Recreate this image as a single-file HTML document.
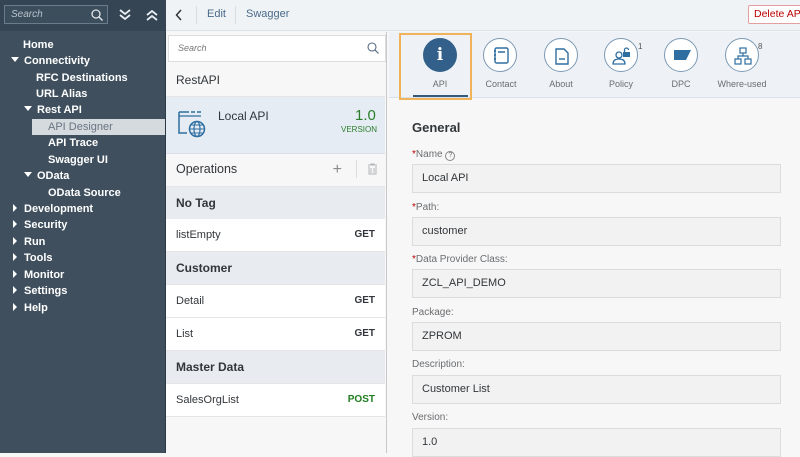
<!DOCTYPE html>
<html><head><style>
*{margin:0;padding:0;box-sizing:border-box}
body{width:800px;height:453px;overflow:hidden;font-family:"Liberation Sans",sans-serif;background:#f7f7f7;position:relative}
.a{position:absolute}
.nav{color:#fff;font-size:11px;font-weight:bold;position:absolute;white-space:nowrap}
.tri{display:inline-block;width:0;height:0}
.row{position:absolute;left:166px;width:219px;height:33px;border-bottom:1px solid #e5e5e5;font-size:11px;color:#32363a;padding:0 10px;line-height:32px;background:#fff}
.grp{background:#e8ecf0;font-weight:bold;font-size:12px;color:#32363a}
.m{float:right;font-weight:bold;font-size:10px;color:#32363a}
.lbl{position:absolute;left:412px;font-size:10px;color:#6a6d70}
.lbl b{color:#bb0000;font-weight:normal}
.inp{position:absolute;left:412px;width:369px;height:29px;background:#f2f2f2;border:1px solid #dcdcdc;font-size:11px;color:#32363a;padding-left:9px;line-height:27px}
.ic{position:absolute;top:38px;width:34px;height:34px;border:1px solid #7c99b4;border-radius:50%;background:#fff}
.tl{position:absolute;top:79px;font-size:9px;color:#6a6d70;width:80px;text-align:center}
</style></head><body>
<!-- sidebar -->
<div class="a" style="left:0;top:0;width:166px;height:453px;background:#3f4f5e;border-right:1px solid #2b3a47"></div>
<div class="a" style="left:0;top:0;width:166px;height:31px;background:#354553"></div>
<div class="a" style="left:4px;top:5px;width:104px;height:19px;border:1px solid #6b7c8c;background:#3c4d5c;color:#b8c3cc;font-size:10px;font-style:italic;padding-left:6px;line-height:17px">Search
<svg class="a" style="right:4px;top:3px" width="12" height="12" viewBox="0 0 12 12"><circle cx="5" cy="5" r="4" fill="none" stroke="#dfe5ea" stroke-width="1.3"/><path d="M8 8l3.5 3.5" stroke="#dfe5ea" stroke-width="1.4"/></svg></div>
<svg class="a" style="left:118px;top:8px" width="14" height="14" viewBox="0 0 14 14"><path d="M2 2l5 4 5-4M2 7l5 4 5-4" fill="none" stroke="#e8eef3" stroke-width="1.8"/></svg>
<svg class="a" style="left:145px;top:8px" width="14" height="14" viewBox="0 0 14 14"><path d="M2 7l5-4 5 4M2 12l5-4 5 4" fill="none" stroke="#e8eef3" stroke-width="1.8"/></svg>
<div class="a" style="left:32px;top:119px;width:133px;height:16px;background:#d5dadf"></div>
<div class="nav" style="left:23px;top:39px">Home</div>
<div class="nav" style="left:11px;top:55px"><span class="tri" style="border-left:4px solid transparent;border-right:4px solid transparent;border-top:5px solid #fff;margin-right:5px;vertical-align:2px"></span>Connectivity</div>
<div class="nav" style="left:36px;top:72px">RFC Destinations</div>
<div class="nav" style="left:36px;top:88px">URL Alias</div>
<div class="nav" style="left:24px;top:104px"><span class="tri" style="border-left:4px solid transparent;border-right:4px solid transparent;border-top:5px solid #fff;margin-right:5px;vertical-align:2px"></span>Rest API</div>
<div class="nav" style="left:48px;top:121px;color:#6a7480;font-weight:normal">API Designer</div>
<div class="nav" style="left:48px;top:137px">API Trace</div>
<div class="nav" style="left:48px;top:154px">Swagger UI</div>
<div class="nav" style="left:24px;top:170px"><span class="tri" style="border-left:4px solid transparent;border-right:4px solid transparent;border-top:5px solid #fff;margin-right:5px;vertical-align:2px"></span>OData</div>
<div class="nav" style="left:48px;top:187px">OData Source</div>
<div class="nav" style="left:13px;top:203px"><span class="tri" style="border-top:4px solid transparent;border-bottom:4px solid transparent;border-left:4px solid #fff;margin-right:7px"></span>Development</div>
<div class="nav" style="left:13px;top:219px"><span class="tri" style="border-top:4px solid transparent;border-bottom:4px solid transparent;border-left:4px solid #fff;margin-right:7px"></span>Security</div>
<div class="nav" style="left:13px;top:236px"><span class="tri" style="border-top:4px solid transparent;border-bottom:4px solid transparent;border-left:4px solid #fff;margin-right:7px"></span>Run</div>
<div class="nav" style="left:13px;top:252px"><span class="tri" style="border-top:4px solid transparent;border-bottom:4px solid transparent;border-left:4px solid #fff;margin-right:7px"></span>Tools</div>
<div class="nav" style="left:13px;top:269px"><span class="tri" style="border-top:4px solid transparent;border-bottom:4px solid transparent;border-left:4px solid #fff;margin-right:7px"></span>Monitor</div>
<div class="nav" style="left:13px;top:285px"><span class="tri" style="border-top:4px solid transparent;border-bottom:4px solid transparent;border-left:4px solid #fff;margin-right:7px"></span>Settings</div>
<div class="nav" style="left:13px;top:302px"><span class="tri" style="border-top:4px solid transparent;border-bottom:4px solid transparent;border-left:4px solid #fff;margin-right:7px"></span>Help</div>
<!-- header -->
<div class="a" style="left:166px;top:0;width:634px;height:31px;background:#eff3f6;border-bottom:1px solid #d9e0e6"></div>
<svg class="a" style="left:175px;top:9px" width="8" height="12" viewBox="0 0 8 12"><path d="M6 1L1.5 6 6 11" fill="none" stroke="#32363a" stroke-width="1.5"/></svg>
<div class="a" style="left:196px;top:6px;width:1px;height:18px;background:#d9dde0"></div>
<div class="a" style="left:207px;top:8px;font-size:11px;color:#4a6a88">Edit</div>
<div class="a" style="left:235px;top:6px;width:1px;height:18px;background:#d9dde0"></div>
<div class="a" style="left:246px;top:8px;font-size:11px;color:#4a6a88">Swagger</div>
<div class="a" style="left:748px;top:5px;width:56px;height:19px;border:1px solid #e3a0a0;border-radius:2px;background:#fff;color:#bb0000;font-size:10.5px;padding-left:5px;line-height:17px;white-space:nowrap">Delete API</div>
<!-- middle -->
<div class="a" style="left:166px;top:32px;width:221px;height:421px;background:#f7f7f7;border-right:1px solid #c8c8c8"></div>
<div class="a" style="left:168px;top:35px;width:218px;height:27px;background:#fff;border:1px solid #ddd;font-size:9px;font-style:italic;color:#74777a;padding-left:9px;line-height:25px">Search
<svg class="a" style="right:6px;top:6px" width="12" height="12" viewBox="0 0 12 12"><circle cx="5" cy="5" r="4" fill="none" stroke="#556b82" stroke-width="1.1"/><path d="M8 8l3.5 3.5" stroke="#556b82" stroke-width="1.2"/></svg></div>
<div class="row" style="top:64px;background:#f7f7f7;font-size:12px;line-height:32px">RestAPI</div>
<div class="a" style="left:166px;top:97px;width:219px;height:57px;background:#e5ecf3;border-bottom:1px solid #dde"></div>
<svg class="a" style="left:178px;top:110px" width="30" height="28" viewBox="0 0 30 28"><path d="M1 2h10M13 2h4M19 2h4M1 2v21h8" fill="none" stroke="#2e6ea0" stroke-width="1.5"/><path d="M1 6h22" stroke="#2e6ea0" stroke-width="1.2"/><circle cx="19" cy="19" r="7.5" fill="none" stroke="#2e6ea0" stroke-width="1.5"/><ellipse cx="19" cy="19" rx="3" ry="7.5" fill="none" stroke="#2e6ea0" stroke-width="1.2"/><path d="M11.5 19h15M13 15h12M13 23h12" stroke="#2e6ea0" stroke-width="1"/></svg>
<div class="a" style="left:218px;top:109px;font-size:12px;color:#32363a">Local API</div>
<div class="a" style="left:355px;top:107px;font-size:15px;color:#2b7d2b">1.0</div>
<div class="a" style="left:341px;top:125px;font-size:8px;color:#2b7d2b">VERSION</div>
<div class="row" style="top:154px;background:#f7f7f7;font-size:12.5px;height:33px;line-height:31px">Operations<span style="float:right;color:#8a8d90;font-size:16px;margin-right:33px;font-weight:300">+</span></div>
<div class="a" style="left:356px;top:160px;width:1px;height:18px;background:#ddd"></div>
<svg class="a" style="left:367px;top:163px" width="11" height="12" viewBox="0 0 11 12"><path d="M1 2h9M4 2V1h3v1M2 3v8h7V3M4 5v5M7 5v5" fill="none" stroke="#b0b4b8" stroke-width="1"/></svg>
<div class="row grp" style="top:187px">No Tag</div>
<div class="row" style="top:219px">listEmpty<span class="m">GET</span></div>
<div class="row grp" style="top:252px">Customer</div>
<div class="row" style="top:285px">Detail<span class="m">GET</span></div>
<div class="row" style="top:318px">List<span class="m">GET</span></div>
<div class="row grp" style="top:351px">Master Data</div>
<div class="row" style="top:384px">SalesOrgList<span class="m" style="color:#1f7d1f">POST</span></div>
<!-- right tabs -->
<div class="a" style="left:389px;top:32px;width:411px;height:66px;background:#eef2f6;border-bottom:1px solid #d6e1eb"></div>
<div class="a" style="left:399px;top:33px;width:73px;height:67px;border:2px solid #f0b35a"></div>
<div class="a" style="left:413px;top:95px;width:55px;height:2px;background:#34597a"></div>
<div class="ic" style="left:423px;background:#32608a;border-color:#32608a;color:#fff;font-weight:bold;font-size:17px;text-align:center;line-height:32px;font-family:'DejaVu Serif',serif">i</div>
<div class="tl" style="left:400px">API</div>
<div class="ic" style="left:483px"><svg width="34" height="34" viewBox="0 0 34 34"><rect x="11" y="9" width="13" height="15" rx="1.5" fill="none" stroke="#2e6ea0" stroke-width="1.4"/><path d="M14 13h7M10 12h2M10 16h2M10 20h2" stroke="#2e6ea0" stroke-width="1.4"/></svg></div>
<div class="tl" style="left:461px">Contact</div>
<div class="ic" style="left:544px"><svg width="34" height="34" viewBox="0 0 34 34"><path d="M11 10h8l4 4v11H11z" fill="none" stroke="#2e6ea0" stroke-width="1.4"/><path d="M14 20h6" stroke="#2e6ea0" stroke-width="1.4"/></svg></div>
<div class="tl" style="left:521px">About</div>
<div class="ic" style="left:604px"><svg width="34" height="34" viewBox="0 0 34 34"><circle cx="14" cy="16" r="3" fill="none" stroke="#2e6ea0" stroke-width="1.3"/><path d="M8 25c0-4 3-5 6-5s6 1 6 5z" fill="none" stroke="#2e6ea0" stroke-width="1.3"/><rect x="18" y="13" width="7" height="5" fill="#2e6ea0"/><path d="M19.5 13v-2a2 2 0 0 1 4 0" fill="none" stroke="#2e6ea0" stroke-width="1.3"/></svg></div>
<div class="a" style="left:638px;top:42px;font-size:8px;color:#555">1</div>
<div class="tl" style="left:581px">Policy</div>
<div class="ic" style="left:664px"><svg width="34" height="34" viewBox="0 0 34 34"><path d="M9 11h17l-5 10H9z" fill="#2e6ea0"/></svg></div>
<div class="tl" style="left:641px">DPC</div>
<div class="ic" style="left:725px"><svg width="34" height="34" viewBox="0 0 34 34"><rect x="14" y="9" width="6" height="5" fill="none" stroke="#2e6ea0" stroke-width="1.2"/><rect x="9" y="20" width="6" height="5" fill="none" stroke="#2e6ea0" stroke-width="1.2"/><rect x="19" y="20" width="6" height="5" fill="none" stroke="#2e6ea0" stroke-width="1.2"/><path d="M17 14v3M12 20v-3h10v3" fill="none" stroke="#2e6ea0" stroke-width="1.2"/></svg></div>
<div class="a" style="left:758px;top:42px;font-size:8px;color:#555">8</div>
<div class="tl" style="left:702px">Where-used</div>
<!-- form -->
<div class="a" style="left:412px;top:120px;font-size:13px;font-weight:bold;color:#32363a">General</div>
<div class="lbl" style="top:149px"><b>*</b>Name <span style="display:inline-block;width:10px;height:10px;border:1px solid #888;border-radius:50%;font-size:7px;text-align:center;line-height:8px">?</span></div>
<div class="inp" style="top:164px">Local API</div>
<div class="lbl" style="top:202px"><b>*</b>Path:</div>
<div class="inp" style="top:217px">customer</div>
<div class="lbl" style="top:254px"><b>*</b>Data Provider Class:</div>
<div class="inp" style="top:269px">ZCL_API_DEMO</div>
<div class="lbl" style="top:307px">Package:</div>
<div class="inp" style="top:322px">ZPROM</div>
<div class="lbl" style="top:359px">Description:</div>
<div class="inp" style="top:375px">Customer List</div>
<div class="lbl" style="top:412px">Version:</div>
<div class="inp" style="top:428px">1.0</div>
</body></html>
